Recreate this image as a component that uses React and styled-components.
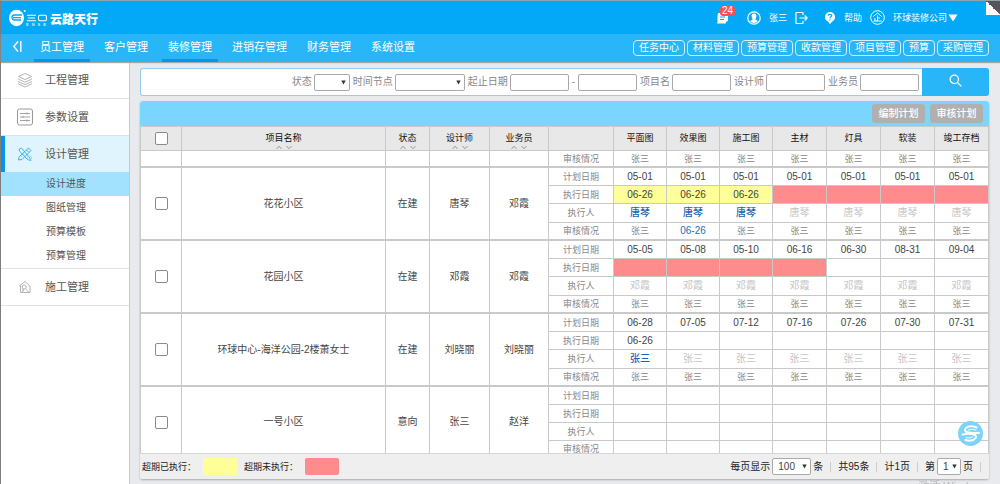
import React from "react";
import styled, { createGlobalStyle, ThemeProvider } from "styled-components";

const theme = {
  header: "#03a9f7",
  nav: "#29b6f8",
  active: "#0396ec",
  line: "#c9c9c9",
  yellow: "#ffff99",
  red: "#ff8c8c",
};

const GlobalStyle = createGlobalStyle`
  * {
    box-sizing: border-box;
  }
  body {
    margin: 0;
    background: #e9eaee;
  }
  body, button, input, select {
    font-family: "Liberation Sans", "Noto Sans CJK SC", sans-serif;
    font-size: 10px;
    line-height: 14px;
  }
  a {
    color: inherit;
    text-decoration: none;
  }
`;

const Page = styled.div`
  display: flex;
  flex-direction: column;
  height: 100vh;
  border-top: 1px solid #8fa3ae;
  border-left: 1px solid #7d7d7d;
`;

/* header */
const Header = styled.header`
  display: flex;
  align-items: center;
  justify-content: space-between;
  height: 33px;
  flex: none;
  padding: 0 42px 0 8px;
  color: #fff;
  background: ${({ theme }) => theme.header};
`;
const Logo = styled.a`
  display: flex;
  align-items: flex-end;
  gap: 2px;
  font-size: 12px;
  font-weight: 900;
  line-height: 14px;
`;
const UserBar = styled.div`
  display: flex;
  align-items: center;
  font-size: 9px;
  gap: ${(props) => props.gap || "16px"};
`;
const UserItem = styled.a`
  display: flex;
  align-items: center;
  gap: 8px;
`;
const Logout = styled.a`
  display: flex;
`;
const Messages = styled.a`
  position: relative;
  display: flex;
  margin-right: 2px;
`;
const Badge = styled.span`
  position: absolute;
  top: -6px;
  left: 4px;
  padding: 0 2px;
  border-radius: 3px;
  background: #f9514f;
  font-size: 10px;
  line-height: 10px;
`;
const Fold = styled.span`
  position: absolute;
  top: 1px;
  right: 0;
  width: 14px;
  height: 14px;
  background: linear-gradient(45deg, #fff 50%, #55555b 50%);
`;

/* main menu */
const NavBar = styled.nav`
  display: flex;
  align-items: stretch;
  height: 28px;
  flex: none;
  padding: 0 11px 0 10px;
  color: #fff;
  background: ${({ theme }) => theme.nav};
  box-shadow: 0 1px 1px #a5a5ac;
  z-index: 1;
`;
const Collapse = styled.button`
  width: 13px;
  padding: 0;
  margin-right: 10px;
  border: 0;
  color: #fff;
  background: none;
`;
const Menu = styled.div`
  display: flex;
  flex: 1;
  gap: 8px;
`;
const MenuLink = styled.a`
  padding: 0 6px;
  font-size: 11px;
  line-height: 26px;
  white-space: nowrap;
  border-bottom: 3px solid
    ${(props) => (props.$active ? props.theme.active : "transparent")};
`;
const Shortcuts = styled.div`
  display: flex;
  align-items: center;
  gap: 2px;
`;
const Shortcut = styled.a`
  padding: 0 5px;
  border: 1px solid #d4f0fe;
  border-radius: 4px;
  white-space: nowrap;
`;

/* side menu */
const Body = styled.div`
  display: flex;
  flex: 1;
  min-height: 0;
`;
const Sidebar = styled.aside`
  width: 129px;
  flex: none;
  background: #fff;
  border-right: 1px solid #c8c8cc;
`;
const SideLink = styled.a`
  display: flex;
  align-items: center;
  gap: 11px;
  height: ${(props) => (props.$active ? "36px" : "37px")};
  padding-left: ${(props) => (props.$active ? "11px" : "15px")};
  color: #555;
  font-size: 11px;
  border-bottom: ${(props) => (props.$active ? "0" : "1px solid #e2e2e2")};
  border-left: ${(props) => (props.$active ? `4px solid ${props.theme.active}` : "0")};
  background: ${(props) => (props.$active ? "#e0f4fe" : "#fff")};
`;
const SubMenu = styled.div`
  border-bottom: 1px solid #e2e2e2;
`;
const SubLink = styled.a`
  display: block;
  padding-left: 45px;
  color: #555;
  line-height: 24px;
  background: ${(props) => (props.$active ? "#a3e2ff" : "#fff")};
`;

/* content */
const Content = styled.main`
  display: flex;
  flex-direction: column;
  flex: 1;
  min-width: 0;
  gap: 5px;
  padding: 6px 11px 5px 10px;
`;
const Search = styled.form`
  display: flex;
  align-items: stretch;
  height: 28px;
  flex: none;
  border: 1px solid #96cdec;
  border-right: 0;
  border-radius: 3px;
  background: #fff;
`;
const Fields = styled.div`
  display: flex;
  flex: 1;
  align-items: center;
  justify-content: flex-end;
  gap: 3px;
  padding-right: 3px;
  color: #888;
`;
const Field = styled.label`
  display: flex;
  align-items: center;
  gap: 2px;
  white-space: nowrap;
`;
const TextBox = styled.input`
  width: 59px;
  height: 17px;
  padding: 0 3px;
  border: 1px solid #a9a9a9;
  border-radius: 2px;
`;
const PickerBox = styled.span`
  position: relative;
  display: inline-flex;
  width: ${(props) => props.width};
  svg {
    position: absolute;
    top: 6px;
    right: 4px;
    pointer-events: none;
  }
`;
const Select = styled.select`
  appearance: none;
  width: 100%;
  height: 17px;
  padding: 0 5px;
  color: #444;
  border: 1px solid #a9a9a9;
  border-radius: 2px;
  background: #fff;
`;
const SearchButton = styled.button`
  width: 67px;
  margin: -1px 0;
  padding: 0;
  border: 0;
  border-radius: 0 3px 3px 0;
  color: #fff;
  background: ${({ theme }) => theme.nav};
`;
const Panel = styled.section`
  display: flex;
  flex-direction: column;
  flex: 1;
  min-height: 0;
  border-radius: 3px;
  background: #fff;
  box-shadow: 0 1px 2px #a8a8a8;
  overflow: hidden;
`;
const PanelBar = styled.div`
  display: flex;
  align-items: center;
  justify-content: flex-end;
  gap: 5px;
  height: 25px;
  flex: none;
  padding-right: 6px;
  background: #7ad6ff;
`;
const PlanButton = styled.button`
  width: 53px;
  height: 19px;
  padding: 0;
  border: 0;
  border-radius: 3px;
  color: #fff;
  font-weight: 500;
  background: #b0b0b0;
`;
const Scroll = styled.div`
  flex: 1;
  min-height: 0;
  overflow-y: auto;
  scrollbar-width: none;
  border-left: 1px solid ${({ theme }) => theme.line};
`;
const Table = styled.table`
  width: 100%;
  table-layout: fixed;
  border-collapse: separate;
  border-spacing: 0;
  text-align: center;
`;
const Th = styled.th`
  position: sticky;
  top: 0;
  height: 25px;
  padding: ${(props) => (props.$check ? "0" : "4px 0 0")};
  vertical-align: ${(props) => (props.$check ? "middle" : "top")};
  color: #111;
  font-size: 9px;
  font-weight: 400;
  line-height: 14px;
  border: solid ${({ theme }) => theme.line};
  border-width: 1px 1px 1px 0;
  background: #e8e8e8;
  svg {
    display: block;
    margin: 0 auto;
  }
`;
const Td = styled.td`
  height: ${(props) => props.height || "18px"};
  padding: 0;
  color: ${(props) => props.color || "#444"};
  font-size: ${(props) => (props.$small ? "9px" : "10px")};
  font-weight: ${(props) => (props.$strong ? 500 : 400)};
  line-height: 14px;
  border: solid ${({ theme }) => theme.line};
  border-width: 0 1px ${(props) => (props.$last ? "2px" : "1px")} 0;
  background: ${(props) => props.theme[props.$fill] || "#fff"};
`;
const Check = styled.input`
  appearance: none;
  display: block;
  width: 13px;
  height: 13px;
  margin: 0 auto;
  border: 1px solid #8a8a8a;
  border-radius: 2px;
  background: #fff;
`;
const Footer = styled.footer`
  display: flex;
  align-items: center;
  justify-content: space-between;
  height: 26px;
  flex: none;
  padding: 0 8px 0 2px;
  color: #222;
  border-top: 1px solid #d5d5d5;
  background: #efefef;
`;
const Legend = styled.div`
  display: flex;
  align-items: center;
  gap: 7px;
  font-size: 9px;
`;
const Swatch = styled.span`
  width: 34px;
  height: 17px;
  border-radius: 2px;
  background: ${(props) => props.theme[props.$fill]};
`;
const Pager = styled.div`
  display: flex;
  align-items: center;
  gap: 7px;
`;
const Divider = styled.span`
  width: 1px;
  height: 10px;
  background: #ccc;
`;
const Service = styled.button`
  position: fixed;
  right: 17px;
  bottom: 38px;
  width: 25px;
  height: 25px;
  padding: 0;
  border: 0;
  border-radius: 50%;
  background: #7dd3fc;
`;
const Watermark = styled.span`
  position: fixed;
  right: 12px;
  bottom: -9px;
  color: #b9b9bd;
  font-size: 11px;
  pointer-events: none;
`;

const Arrow = () => (
  <svg width="5" height="5" viewBox="0 0 5 5">
    <path d="M0.3 0.5h4.4L2.5 4.5z" fill="#333" />
  </svg>
);

const SortIcon = () => (
  <svg width="16" height="5" viewBox="0 0 16 5" fill="none" stroke="#999">
    <path d="M0.5 4L3 1.2L5.5 4M10.5 1L13 3.8L15.5 1" />
  </svg>
);

const LogoMark = () => (
  <svg width="39" height="19" viewBox="0 0 39 19" fill="none">
    <ellipse cx="7.5" cy="10" rx="7.5" ry="8.3" fill="#fff" />
    <circle cx="15.7" cy="3" r="1" fill="#fff" />
    <path d="M13 7H5.5Q3 7 3 9.5T5.5 12H12M4 9.6h8" stroke="#03a9f7" strokeWidth="1.3" />
    <path d="M18 7.3h9M19 10h7M18 12.7h9" stroke="#fff" strokeWidth="1.1" />
    <rect x="29.5" y="7.3" width="8" height="5.4" rx="1.5" stroke="#fff" strokeWidth="1.1" />
    <text x="17" y="18" fill="#d5f1ff" fontSize="4" letterSpacing="3">ENSE</text>
  </svg>
);

const LayersIcon = () => (
  <svg width="18" height="16" viewBox="0 0 18 16" fill="none" stroke="#aaa" strokeWidth="0.9">
    <path d="M9 1.5L15.5 4.5L9 7.5L2.5 4.5z" />
    <path d="M2.5 6.5V7.2L9 10.2L15.5 7.2V6.5M2.5 9V9.8L9 12.6L15.5 9.8V9M2.5 11.5V12L9 15L15.5 12V11.5" />
  </svg>
);

const ParamsIcon = () => (
  <svg width="18" height="18" viewBox="0 0 18 18" fill="none" stroke="#999">
    <rect x="1.5" y="1" width="15" height="16" rx="2" />
    <path d="M4 5.5h10M4 9h10M4 12.5h10M11 4.5v2M7 8v2M11 11.5v2" strokeWidth="0.9" />
  </svg>
);

const DesignIcon = () => (
  <svg width="18" height="16" viewBox="0 0 18 16" fill="none" stroke="#35b5f3" strokeWidth="1">
    <path d="M3 3.5L5.5 2L13.5 11.5L15 14.5L11.5 13.5L3.5 5z" />
    <path d="M12.5 2L15 4.5L6 13.5L2.5 14L3.2 10.8zM10.5 4l2.5 2.5M5 9.5l1 1M7 7.5l1 1" />
    <circle cx="13.5" cy="12" r="2" stroke="#8fd8fb" />
  </svg>
);

const BuildIcon = () => (
  <svg width="18" height="14" viewBox="0 0 18 14" fill="none" stroke="#aaa" strokeWidth="0.9">
    <path d="M4.5 12.5V6L3.5 6L9 1.5L14 6V12.5z" />
    <circle cx="8.2" cy="7" r="2" />
    <path d="M9.5 8.5L12.5 12M6 10h2M6 12l2-2" />
  </svg>
);

const menus = ["员工管理", "客户管理", "装修管理", "进销存管理", "财务管理", "系统设置"];
const shortcuts = ["任务中心", "材料管理", "预算管理", "收款管理", "项目管理", "预算", "采购管理"];
const subMenus = ["设计进度", "图纸管理", "预算模板", "预算管理"];
const sortable = ["项目名称", "状态", "设计师", "业务员"];
const stages = ["平面图", "效果图", "施工图", "主材", "灯具", "软装", "竣工存档"];
const columns = ["41px", "auto", "44px", "60px", "59px", "65px", "53px", "53px", "53px", "54px", "54px", "54px", "54px"];

// done: how many stages have been carried out, late: fill of each execution cell
const projects = [
  {
    name: "花花小区", status: "在建", designer: "唐琴", sales: "邓霞", worker: "唐琴", done: 3,
    plan: ["05-01", "05-01", "05-01", "05-01", "05-01", "05-01", "05-01"],
    exec: ["06-26", "06-26", "06-26"],
    late: ["yellow", "yellow", "yellow", "red", "red", "red", "red"],
    audit: { 1: "06-26" },
  },
  {
    name: "花园小区", status: "在建", designer: "邓霞", sales: "邓霞", worker: "邓霞", done: 0,
    plan: ["05-05", "05-08", "05-10", "06-16", "06-30", "08-31", "09-04"],
    exec: [],
    late: ["red", "red", "red", "red"],
    audit: {},
  },
  {
    name: "环球中心-海洋公园-2楼萧女士", status: "在建", designer: "刘晓丽", sales: "刘晓丽", worker: "张三", done: 1,
    plan: ["06-28", "07-05", "07-12", "07-16", "07-26", "07-30", "07-31"],
    exec: ["06-26"],
    late: [],
    audit: {},
  },
  {
    name: "一号小区", status: "意向", designer: "张三", sales: "赵洋", done: 0,
    plan: [],
    exec: [],
    late: [],
    audit: {},
  },
];

function Picker({ width, options, label }) {
  return (
    <PickerBox width={width}>
      <Select aria-label={label}>
        {options.map((option) => (
          <option key={option}>{option}</option>
        ))}
      </Select>
      <Arrow />
    </PickerBox>
  );
}

function Project({ item }) {
  const workerHeight = item.worker ? "19px" : "18px";
  return (
    <>
      <tr>
        <Td rowSpan={4} $last>
          <Check type="checkbox" aria-label={item.name} />
        </Td>
        <Td rowSpan={4} $last>{item.name}</Td>
        <Td rowSpan={4} $last>{item.status}</Td>
        <Td rowSpan={4} $last>{item.designer}</Td>
        <Td rowSpan={4} $last>{item.sales}</Td>
        <Td $small color="#888">计划日期</Td>
        {stages.map((stage, i) => (
          <Td key={stage}>{item.plan[i]}</Td>
        ))}
      </tr>
      <tr>
        <Td $small color="#888">执行日期</Td>
        {stages.map((stage, i) => (
          <Td key={stage} $fill={item.late[i]}>{item.exec[i]}</Td>
        ))}
      </tr>
      <tr>
        <Td $small color="#888" height={workerHeight}>执行人</Td>
        {stages.map((stage, i) => (
          <Td
            key={stage}
            height={workerHeight}
            $strong={i < item.done}
            color={i < item.done ? "#1565b5" : "#c4c4c4"}
          >
            {item.worker}
          </Td>
        ))}
      </tr>
      <tr>
        <Td $small $last color="#888">审核情况</Td>
        {stages.map((stage, i) => (
          <Td key={stage} $last $small={!item.audit[i]} color={item.audit[i] ? "#2a6cb8" : "#888"}>
            {item.audit[i] || (item.worker && "张三")}
          </Td>
        ))}
      </tr>
    </>
  );
}

export default function App() {
  return (
    <ThemeProvider theme={theme}>
      <GlobalStyle />
      <Page>
        <Header>
          <Logo href="#">
            <LogoMark />
            云路天行
          </Logo>
          <UserBar>
            <Messages href="#">
              <svg width="13" height="12" viewBox="0 0 13 12">
                <path d="M3 1H11Q12 1 12 2V8Q12 9.5 10.5 9.5L9.5 11.5H1L1.5 10V4Q1.5 1 3 1z" fill="#fff" />
                <path d="M4 5h5M4 7.5h4" stroke="#03a9f7" />
              </svg>
              <Badge>24</Badge>
            </Messages>
            <UserBar gap="8px">
              <UserItem href="#">
                <svg width="14" height="14" viewBox="0 0 14 14" fill="none">
                  <circle cx="7" cy="7" r="6.2" stroke="#fff" strokeWidth="1.2" />
                  <path d="M7 2.5C9 2.5 9.7 4 9.3 6Q9 7.5 8.3 8.2Q8.5 9 11 10Q9.5 12 7 12T3 10Q5.5 9 5.7 8.2Q5 7.5 4.7 6C4.3 4 5 2.5 7 2.5z" fill="#fff" />
                </svg>
                张三
              </UserItem>
              <Logout href="#" aria-label="退出">
                <svg width="13" height="14" viewBox="0 0 13 14" fill="none" stroke="#fff" strokeWidth="1.2">
                  <path d="M8 4V2Q8 1.5 7.5 1.5H1.5Q1 1.5 1 2V12Q1 12.5 1.5 12.5H7.5Q8 12.5 8 12V10M4.5 7H12M9.7 4.5L12.2 7L9.7 9.5" />
                </svg>
              </Logout>
            </UserBar>
            <UserBar gap="8px">
              <UserItem href="#">
                <svg width="12" height="14" viewBox="0 0 12 14" fill="none">
                  <path d="M6 1A5 5 0 0 1 8.5 10.3L6 13L3.5 10.3A5 5 0 0 1 6 1z" fill="#fff" />
                  <path d="M4.3 4.8Q4.3 3.3 6 3.3T7.7 4.8Q7.7 5.800 6 6.5V7.3M6 8.3V9.4" stroke="#03a9f7" strokeWidth="1.2" />
                </svg>
                帮助
              </UserItem>
              <UserBar gap="1px">
                <UserItem href="#">
                  <svg width="15" height="15" viewBox="0 0 15 15" fill="none" stroke="#fff">
                    <circle cx="7.5" cy="7.5" r="6.8" />
                    <path d="M3.3 6.5L7.5 3L11.7 6.5M7.5 5.5V11M7.5 8H10M5 8V11M3.5 11H11.5" />
                  </svg>
                  环球装修公司
                </UserItem>
                <svg width="10" height="8" viewBox="0 0 10 8">
                  <path d="M0.5 0.5h9L5 7.5z" fill="#fff" />
                </svg>
              </UserBar>
            </UserBar>
          </UserBar>
          <Fold />
        </Header>

        <NavBar>
          <Collapse aria-label="收起菜单">
            <svg width="11" height="13" viewBox="0 0 11 13" fill="none" stroke="#fff" strokeWidth="1.4">
              <path d="M6 1.5L1.8 6.5L6 11.5M8.8 1V12" />
            </svg>
          </Collapse>
          <Menu>
            {menus.map((menu) => (
              <MenuLink key={menu} href="#" $active={menu === "员工管理" || menu === "装修管理"}>
                {menu}
              </MenuLink>
            ))}
          </Menu>
          <Shortcuts>
            {shortcuts.map((item) => (
              <Shortcut key={item} href="#">{item}</Shortcut>
            ))}
          </Shortcuts>
        </NavBar>

        <Body>
          <Sidebar>
            <SideLink href="#"><LayersIcon />工程管理</SideLink>
            <SideLink href="#"><ParamsIcon />参数设置</SideLink>
            <SideLink href="#" $active><DesignIcon />设计管理</SideLink>
            <SubMenu>
              {subMenus.map((item, i) => (
                <SubLink key={item} href="#" $active={i === 0}>{item}</SubLink>
              ))}
            </SubMenu>
            <SideLink href="#"><BuildIcon />施工管理</SideLink>
          </Sidebar>

          <Content>
            <Search>
              <Fields>
                <Field>状态<Picker width="36px" options={[""]} label="状态" /></Field>
                <Field>时间节点<Picker width="70px" options={[""]} label="时间节点" /></Field>
                <Field>起止日期<TextBox /></Field>
                <span>-</span>
                <TextBox aria-label="截止日期" />
                <Field>项目名<TextBox /></Field>
                <Field>设计师<TextBox /></Field>
                <Field>业务员<TextBox /></Field>
              </Fields>
              <SearchButton type="button" aria-label="搜索">
                <svg width="13" height="13" viewBox="0 0 13 13" fill="none" stroke="#fff" strokeWidth="1.2">
                  <circle cx="5.3" cy="5.3" r="4.2" />
                  <path d="M8.5 8.5L12.3 12.3" />
                </svg>
              </SearchButton>
            </Search>

            <Panel>
              <PanelBar>
                <PlanButton>编制计划</PlanButton>
                <PlanButton>审核计划</PlanButton>
              </PanelBar>
              <Scroll>
                <Table>
                  <colgroup>
                    {columns.map((width, i) => (
                      <col key={i} style={{ width }} />
                    ))}
                  </colgroup>
                  <thead>
                    <tr>
                      <Th $check><Check type="checkbox" aria-label="全选" /></Th>
                      {sortable.map((name) => (
                        <Th key={name}>{name}<SortIcon /></Th>
                      ))}
                      <Th />
                      {stages.map((stage) => (
                        <Th key={stage}>{stage}</Th>
                      ))}
                    </tr>
                  </thead>
                  <tbody>
                    <tr>
                      {["", ...sortable.slice(1), ""].map((_, i) => (
                        <Td key={i} $last height="17px" />
                      ))}
                      <Td $small $last height="17px" color="#888">审核情况</Td>
                      {stages.map((stage) => (
                        <Td key={stage} $small $last height="17px" color="#888">张三</Td>
                      ))}
                    </tr>
                    {projects.map((item) => (
                      <Project key={item.name} item={item} />
                    ))}
                  </tbody>
                </Table>
              </Scroll>
              <Footer>
                <Legend>
                  <span>超期已执行：</span>
                  <Swatch $fill="yellow" />
                  <span>超期未执行：</span>
                  <Swatch $fill="red" />
                </Legend>
                <Pager>
                  <Field>每页显示<Picker width="39px" options={["100"]} label="每页显示" />条</Field>
                  <Divider />
                  <span>共95条</span>
                  <Divider />
                  <span>计1页</span>
                  <Divider />
                  <Field>第<Picker width="24px" options={["1"]} label="页码" />页</Field>
                  <Divider />
                </Pager>
              </Footer>
            </Panel>
          </Content>
        </Body>
        <Service aria-label="在线客服">
          <svg width="25" height="25" viewBox="0 0 25 25" fill="none" stroke="#fff" strokeLinecap="round">
            <path d="M18.5 6.5Q12 4 8 7Q5.5 9.5 9 11.3Q14 12.5 21 11.8" strokeWidth="2" />
            <path d="M4.5 13.5Q13 12 17 14Q19.5 16 16 18.5Q12 20.5 7.5 19" strokeWidth="2" />
            <path d="M18 9Q13 7.5 10.5 9M8 16.8Q12 17.5 14.5 15.8" strokeWidth="1" />
          </svg>
        </Service>
        <Watermark>激活 Windows</Watermark>
      </Page>
    </ThemeProvider>
  );
}
